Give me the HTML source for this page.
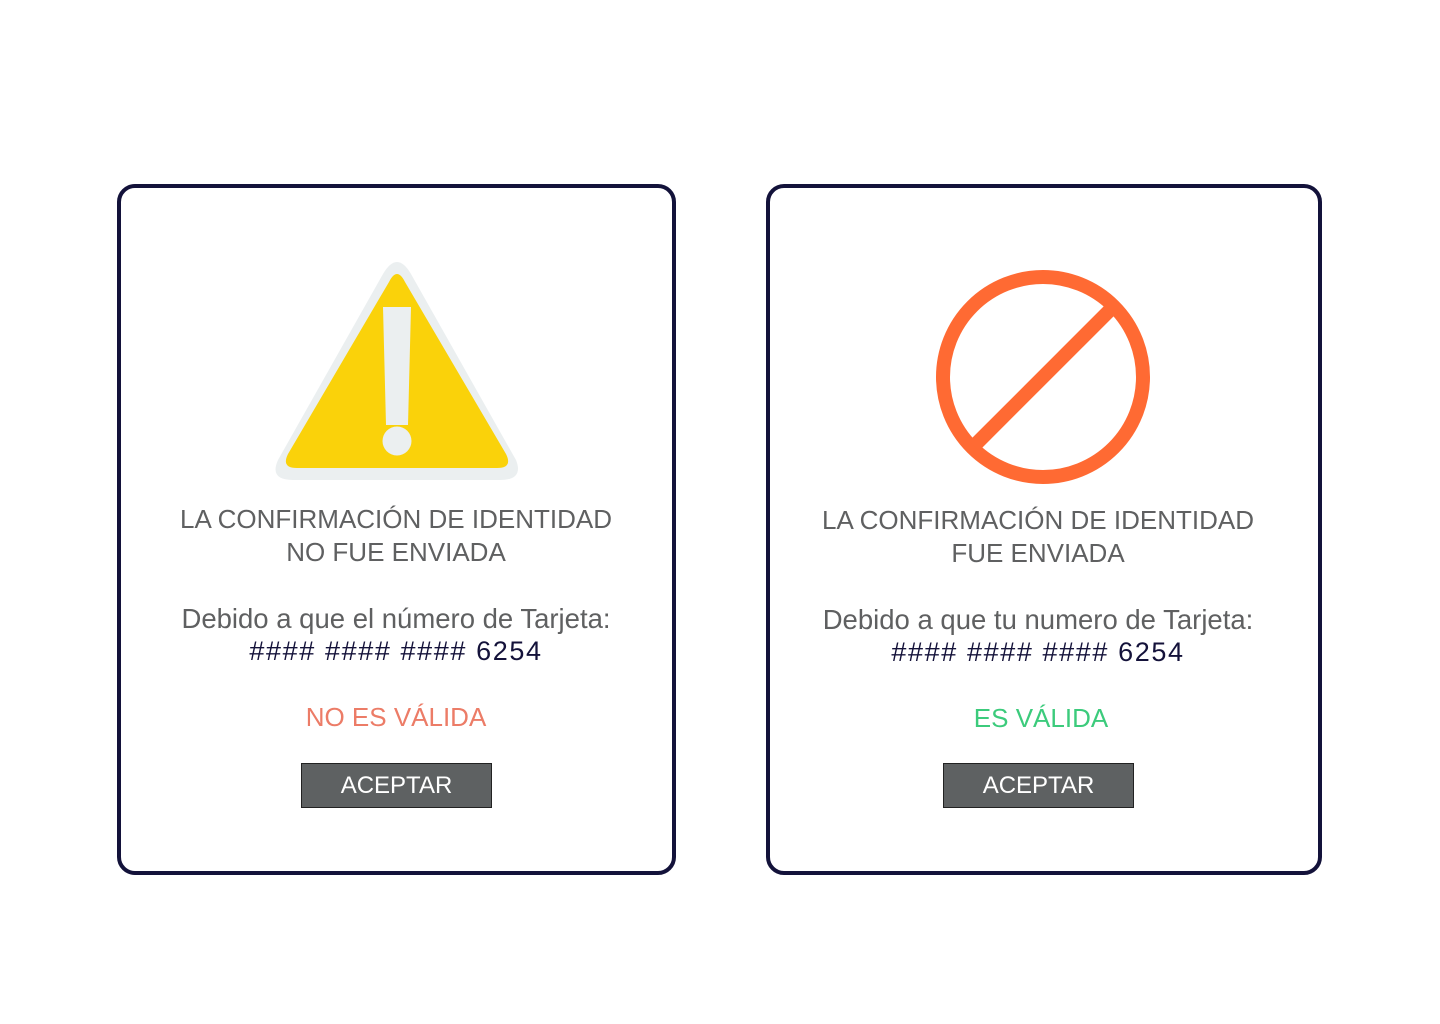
<!DOCTYPE html>
<html><head><meta charset="utf-8"><style>
body{margin:0;width:1440px;height:1024px;background:#fff;position:relative;font-family:"Liberation Sans",sans-serif;overflow:hidden}
.card{position:absolute;top:184px;height:683px;border:4px solid #13123a;border-radius:18px;box-sizing:content-box}
.t{position:absolute;text-align:center;font-size:26px;color:#5f6061;white-space:nowrap;line-height:33px}
.d{font-size:27.5px}
.n{font-size:27px;letter-spacing:1.6px;color:#14123a}
.btn{position:absolute;width:189px;height:43px;background:#5e6162;border:1px solid #222;color:#fff;font-size:24px;line-height:43px;text-align:center}
</style></head><body>
<div class="card" style="left:117px;width:551px"></div>
<div class="card" style="left:766px;width:548px"></div>
<svg style="position:absolute;left:0;top:0" width="1440" height="1024">
<path d="M383 274 Q397 250 411 274 L516 460 Q524 480 500 480 L293 480 Q269 480 278 460 Z" fill="#ebeff0"/>
<path d="M389 282 Q397 266 405 282 L506 454 Q513 468 497 468 L297 468 Q281 468 288 454 Z" fill="#fad20a"/>
<path d="M383 307 L411 307 L408 425 L386 425 Z" fill="#ebeff0"/>
<circle cx="397" cy="441" r="14.5" fill="#ebeff0"/>
<circle cx="1043" cy="377" r="100" fill="none" stroke="#ff6a33" stroke-width="14"/>
<line x1="974" y1="446" x2="1114" y2="306" stroke="#ff6a33" stroke-width="14"/>
</svg>
<div class="t" style="left:96px;width:600px;top:503px">LA CONFIRMACIÓN DE IDENTIDAD</div>
<div class="t" style="left:96px;width:600px;top:536px">NO FUE ENVIADA</div>
<div class="t d" style="left:96px;width:600px;top:602px">Debido a que el número de Tarjeta:</div>
<div class="t n" style="left:96px;width:600px;top:635px">#### #### #### 6254</div>
<div class="t" style="left:96px;width:600px;top:701px;color:#ec7c67">NO ES VÁLIDA</div>
<div class="btn" style="left:301px;top:763px">ACEPTAR</div>
<div class="t" style="left:738px;width:600px;top:504px">LA CONFIRMACIÓN DE IDENTIDAD</div>
<div class="t" style="left:738px;width:600px;top:537px">FUE ENVIADA</div>
<div class="t d" style="left:738px;width:600px;top:603px">Debido a que tu numero de Tarjeta:</div>
<div class="t n" style="left:738px;width:600px;top:636px">#### #### #### 6254</div>
<div class="t" style="left:741px;width:600px;top:702px;color:#3ccb7c">ES VÁLIDA</div>
<div class="btn" style="left:943px;top:763px">ACEPTAR</div>
</body></html>
